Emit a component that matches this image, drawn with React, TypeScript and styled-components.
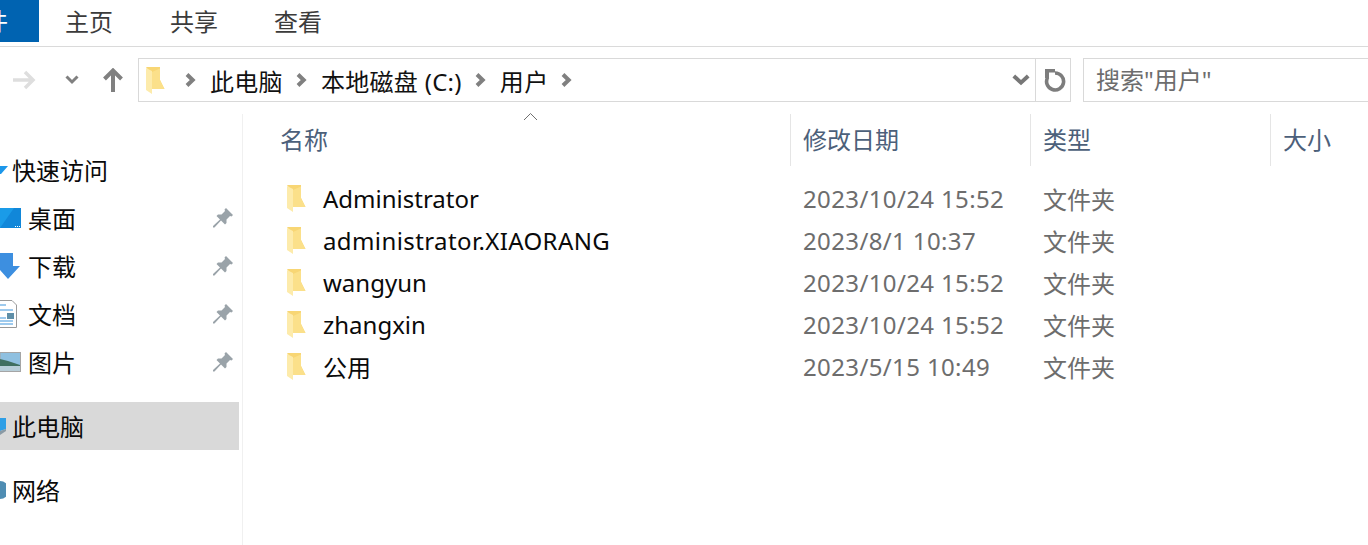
import styled, { createGlobalStyle } from "styled-components";

const GlobalStyle = createGlobalStyle`
    html, body {
        margin: 0;
        padding: 0;
        background: #ffffff;
        overflow: hidden;
    }
    body {
        font-family: "Noto Sans", "Noto Sans CJK SC", sans-serif;
    }
`;

const Page = styled.div`
    width: 1368px;
    height: 545px;
    overflow: hidden;
    display: flex;
    flex-direction: column;
    background: #fff;
`;

const Ribbon = styled.div`
    height: 46px;
    flex: none;
    display: flex;
    align-items: flex-start;
    border-bottom: 1px solid #dadada;
`;

const FileTab = styled.div`
    width: 39px;
    height: 42px;
    background: #0063b1;
    color: #fff;
    font-size: 24px;
    line-height: 42px;
    overflow: hidden;
    flex: none;
    text-indent: -40px;
    white-space: nowrap;
`;

const RibbonTab = styled.div<{ $first?: boolean }>`
    width: ${(props) => (props.$first ? "105px" : "104px")};
    height: 42px;
    flex: none;
    margin-left: ${(props) => (props.$first ? "26px" : "0")};
    font-size: 24px;
    line-height: 44px;
    color: #3b3b3b;
`;

const NavBar = styled.div`
    height: 44px;
    margin-top: 11px;
    flex: none;
    display: flex;
    align-items: center;
`;

const NavButtons = styled.div`
    width: 138px;
    flex: none;
    display: flex;
    align-items: center;
    height: 44px;
`;

const NavIcon = styled.svg<{ $left?: number; $right?: number }>`
    display: block;
    flex: none;
    margin-left: ${(props) => props.$left ?? 0}px;
    margin-right: ${(props) => props.$right ?? 0}px;
`;

const AddressBox = styled.div`
    width: 931px;
    height: 42px;
    flex: none;
    display: flex;
    align-items: center;
    border: 1px solid #d9d9d9;
`;

const Crumbs = styled.div`
    flex: 1;
    display: flex;
    align-items: center;
    height: 100%;
    padding-left: 7px;
`;

const CrumbFolder = styled.div`
    margin-right: 20px;
    flex: none;
`;

const Crumb = styled.span`
    font-size: 24px;
    color: #111;
    letter-spacing: 0.3px;
    margin: 0 13px 0 14px;
    white-space: nowrap;
`;

const RefreshCell = styled.div`
    width: 34px;
    height: 100%;
    border-left: 1px solid #d9d9d9;
    display: flex;
    align-items: center;
    justify-content: center;
`;

const SearchBox = styled.div`
    margin-left: 12px;
    flex: 1;
    height: 42px;
    border: 1px solid #d9d9d9;
    border-right: none;
    padding-left: 12px;
    font-size: 24px;
    line-height: 42px;
    color: #6d6d6d;
    white-space: nowrap;
`;

const Body = styled.div`
    flex: 1;
    margin-top: 12px;
    display: flex;
    min-height: 0;
`;

const Sidebar = styled.nav`
    width: 242px;
    flex: none;
    border-right: 1px solid #f0f0f0;
    display: flex;
    flex-direction: column;
    padding-top: 32px;
`;

const NavRow = styled.div<{ $selected?: boolean; $gapTop?: number }>`
    width: 239px;
    height: 48px;
    flex: none;
    margin-top: ${(props) => props.$gapTop ?? 0}px;
    display: flex;
    align-items: center;
    background: ${(props) => (props.$selected ? "#d9d9d9" : "transparent")};
    font-size: 24px;
    color: #0a0a0a;
`;

const IconSlot = styled.div<{ $width: number }>`
    width: ${(props) => props.$width}px;
    flex: none;
    height: 100%;
    display: flex;
    align-items: center;
    overflow: hidden;
`;

const NavLabel = styled.span<{ $left?: number }>`
    flex: 1;
    white-space: nowrap;
    margin-left: ${(props) => props.$left ?? 0}px;
    padding-bottom: 2px;
`;

const PinSlot = styled.div`
    width: 26px;
    flex: none;
    display: flex;
    justify-content: flex-start;
`;

const Files = styled.main`
    flex: 1;
    min-width: 0;
    display: flex;
    flex-direction: column;
    position: relative;
`;

const HeaderRow = styled.div`
    height: 50px;
    flex: none;
    display: grid;
    grid-template-columns: 548px 240px 240px 1fr;
    font-size: 24px;
    color: #4c607a;
`;

const HeaderCell = styled.div<{ $first?: boolean }>`
    padding-left: ${(props) => (props.$first ? "37px" : "12px")};
    border-right: 1px solid #e5e5e5;
    line-height: 52px;
    white-space: nowrap;
    &:last-child {
        border-right: none;
    }
`;

const SortCaret = styled.svg`
    position: absolute;
    left: 280px;
    top: -2px;
`;

const FileList = styled.div`
    margin-top: 13px;
    display: flex;
    flex-direction: column;
`;

const FileRow = styled.div`
    height: 42px;
    display: grid;
    grid-template-columns: 548px 240px 240px 1fr;
    align-items: center;
    font-size: 24px;
`;

const NameCell = styled.div`
    display: flex;
    align-items: center;
    padding-left: 44px;
    gap: 17px;
    color: #0a0a0a;
    white-space: nowrap;
`;

const NameText = styled.span<{ $spacing?: number }>`
    letter-spacing: ${(props) => props.$spacing ?? 0}px;
`;

const DateCell = styled.div`
    padding-left: 12px;
    color: #6d6d6d;
    letter-spacing: 0.37px;
    white-space: nowrap;
`;

const TypeCell = styled.div`
    padding-left: 12px;
    color: #6d6d6d;
    white-space: nowrap;
`;

function FolderIcon() {
    return (
        <NavIcon width={19} height={27} viewBox="0 0 19 27">
            <path d="M0 0 H14 V13 L18.5 22 H6 V8 Z" fill="#f8d674" />
            <path d="M6 5 L14 1.5 V13 L18.5 22 H6 Z" fill="#fbe08a" />
            <path d="M0 1 L6 4 V27 L0 23 Z" fill="#fdebab" />
        </NavIcon>
    );
}

function Pin() {
    return (
        <NavIcon width={20} height={20} viewBox="0 0 20 20">
            <path d="M13 0 L20 7 L18.5 8.5 L17 8 L13.5 11.5 L13.5 15 L12 16.5 L8 12.5 L1.5 19.5 L0 19.5 L0 18 L7 11.5 L3.5 8 L5 6.5 L8.5 6.5 L12 3 L11.5 1.5 Z" fill="#9aa3a9" />
        </NavIcon>
    );
}

function Chevron() {
    return (
        <NavIcon width={11} height={14} viewBox="0 0 11 14">
            <path d="M2 1.5 L7.7 7 L2 12.5" fill="none" stroke="#808080" strokeWidth="4" />
        </NavIcon>
    );
}

const rows = [
    { name: "Administrator", date: "2023/10/24 15:52" },
    { name: "administrator.XIAORANG", date: "2023/8/1 10:37", spacing: 0.4 },
    { name: "wangyun", date: "2023/10/24 15:52" },
    { name: "zhangxin", date: "2023/10/24 15:52" },
    { name: "公用", date: "2023/5/15 10:49" },
];

export default function App() {
    return (
        <Page>
            <GlobalStyle />
            <Ribbon>
                <FileTab>文件</FileTab>
                <RibbonTab $first>主页</RibbonTab>
                <RibbonTab>共享</RibbonTab>
                <RibbonTab>查看</RibbonTab>
            </Ribbon>
            <NavBar>
                <NavButtons>
                    <NavIcon $left={12} width={24} height={20} viewBox="0 0 24 20">
                        <path d="M1 10 H21 M13 2 L21 10 L13 18" fill="none" stroke="#dedede" strokeWidth="3.5" />
                    </NavIcon>
                    <NavIcon $left={29} width={14} height={10} viewBox="0 0 14 10">
                        <path d="M1.5 1.5 L7 7 L12.5 1.5" fill="none" stroke="#808080" strokeWidth="3" />
                    </NavIcon>
                    <NavIcon $left={24} width={20} height={24} viewBox="0 0 20 24">
                        <path d="M10 24 V3 M1.5 11 L10 2.5 L18.5 11" fill="none" stroke="#808080" strokeWidth="4" />
                    </NavIcon>
                </NavButtons>
                <AddressBox>
                    <Crumbs>
                        <CrumbFolder>
                            <FolderIcon />
                        </CrumbFolder>
                        <Chevron />
                        <Crumb>此电脑</Crumb>
                        <Chevron />
                        <Crumb>本地磁盘 (C:)</Crumb>
                        <Chevron />
                        <Crumb>用户</Crumb>
                        <Chevron />
                    </Crumbs>
                    <NavIcon $right={5} width={18} height={12} viewBox="0 0 18 12">
                        <path d="M1.8 2 L9 8.6 L16.2 2" fill="none" stroke="#777" strokeWidth="4" />
                    </NavIcon>
                    <RefreshCell>
                        <NavIcon $left={3} width={22} height={24} viewBox="0 0 22 24">
                            <path d="M11 5 A8.5 8.5 0 1 1 3.6 9.5" fill="none" stroke="#7d7d7d" strokeWidth="3.6" />
                            <path d="M1 1 H11 V4.5 H5 V10 H1 Z" fill="#7d7d7d" />
                        </NavIcon>
                    </RefreshCell>
                </AddressBox>
                <SearchBox>搜索"用户"</SearchBox>
            </NavBar>
            <Body>
                <Sidebar>
                    <NavRow>
                        <IconSlot $width={12}>
                            <NavIcon width={8} height={10} viewBox="0 0 8 10">
                                <path d="M0 1 H8 L1 9 H0 Z" fill="#1c97ea" />
                            </NavIcon>
                        </IconSlot>
                        <NavLabel>快速访问</NavLabel>
                    </NavRow>
                    <NavRow>
                        <IconSlot $width={21}>
                            <NavIcon width={21} height={20} viewBox="0 0 21 20">
                                <rect width="21" height="20" fill="#1a9be8" />
                                <path d="M0 20 L14 0 H21 V20 Z" fill="#1187d9" />
                                <path d="M15 18.5 H21" stroke="#ffffff" strokeWidth="1" strokeDasharray="1 1" />
                            </NavIcon>
                        </IconSlot>
                        <NavLabel $left={7}>桌面</NavLabel>
                        <PinSlot><Pin /></PinSlot>
                    </NavRow>
                    <NavRow>
                        <IconSlot $width={20}>
                            <NavIcon width={20} height={26} viewBox="0 0 20 26">
                                <path d="M0 0 H13 V13 H20 L8 26 L0 17 Z" fill="#3d8fe0" />
                            </NavIcon>
                        </IconSlot>
                        <NavLabel $left={8}>下载</NavLabel>
                        <PinSlot><Pin /></PinSlot>
                    </NavRow>
                    <NavRow>
                        <IconSlot $width={17}>
                            <NavIcon width={17} height={28} viewBox="0 0 17 28">
                                <path d="M0 0.5 H12 L16.5 5 V27.5 H0" fill="#fff" stroke="#9a9a9a" />
                                <path d="M0 5 H6 M0 10 H13 M0 18 H6 M0 21 H13 M0 24 H13" stroke="#3d95dc" strokeWidth="1" />
                                <rect x="7" y="13" width="7" height="6" fill="#5f8fa8" />
                            </NavIcon>
                        </IconSlot>
                        <NavLabel $left={11}>文档</NavLabel>
                        <PinSlot><Pin /></PinSlot>
                    </NavRow>
                    <NavRow>
                        <IconSlot $width={21}>
                            <NavIcon width={21} height={20} viewBox="0 0 21 20">
                                <rect x="0" y="0.5" width="20.5" height="19" fill="#8fc0e0" stroke="#a5a5a5" />
                                <path d="M0 7 L8 9 L20 13 V19 H0 Z" fill="#3f6f60" />
                                <path d="M0 14 H20 V19 H0 Z" fill="#b7ced8" />
                            </NavIcon>
                        </IconSlot>
                        <NavLabel $left={7}>图片</NavLabel>
                        <PinSlot><Pin /></PinSlot>
                    </NavRow>
                    <NavRow $selected $gapTop={16}>
                        <IconSlot $width={12}>
                            <NavIcon width={6} height={17} viewBox="0 0 6 17">
                                <path d="M0 0 H6 V11 L0 13 Z" fill="#2f9fe6" />
                                <path d="M0 13 L6 11 V13 L0 17 Z" fill="#8a9aa5" />
                            </NavIcon>
                        </IconSlot>
                        <NavLabel>此电脑</NavLabel>
                    </NavRow>
                    <NavRow $gapTop={16}>
                        <IconSlot $width={12}>
                            <NavIcon width={6} height={18} viewBox="0 0 6 18">
                                <path d="M0 0 A9 9 0 0 1 0 18 Z" fill="#4f8db3" />
                            </NavIcon>
                        </IconSlot>
                        <NavLabel>网络</NavLabel>
                    </NavRow>
                </Sidebar>
                <Files>
                    <SortCaret width={15} height={9} viewBox="0 0 15 9">
                        <path d="M1 8 L7.5 1.5 L14 8" fill="none" stroke="#6f6f6f" strokeWidth="1" />
                    </SortCaret>
                    <HeaderRow>
                        <HeaderCell $first>名称</HeaderCell>
                        <HeaderCell>修改日期</HeaderCell>
                        <HeaderCell>类型</HeaderCell>
                        <HeaderCell>大小</HeaderCell>
                    </HeaderRow>
                    <FileList>
                        {rows.map((row) => (
                            <FileRow key={row.name}>
                                <NameCell>
                                    <FolderIcon />
                                    <NameText $spacing={row.spacing}>{row.name}</NameText>
                                </NameCell>
                                <DateCell>{row.date}</DateCell>
                                <TypeCell>文件夹</TypeCell>
                            </FileRow>
                        ))}
                    </FileList>
                </Files>
            </Body>
        </Page>
    );
}
